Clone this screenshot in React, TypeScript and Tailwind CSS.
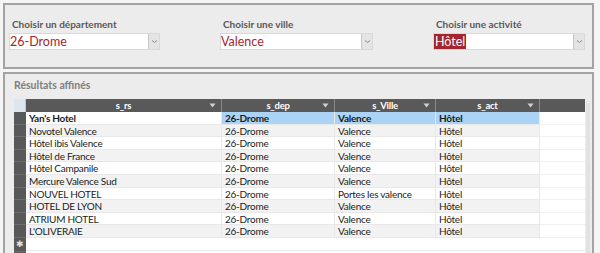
import React from "react";

const rows = [
  ["Yan's Hotel", "26-Drome", "Valence", "Hôtel"],
  ["Novotel Valence", "26-Drome", "Valence", "Hôtel"],
  ["Hôtel ibis Valence", "26-Drome", "Valence", "Hôtel"],
  ["Hôtel de France", "26-Drome", "Valence", "Hôtel"],
  ["Hôtel Campanile", "26-Drome", "Valence", "Hôtel"],
  ["Mercure Valence Sud", "26-Drome", "Valence", "Hôtel"],
  ["NOUVEL HOTEL", "26-Drome", "Portes les valence", "Hôtel"],
  ["HOTEL DE LYON", "26-Drome", "Valence", "Hôtel"],
  ["ATRIUM HOTEL", "26-Drome", "Valence", "Hôtel"],
  ["L'OLIVERAIE", "26-Drome", "Valence", "Hôtel"],
];

const cols = [
  { name: "s_rs", w: "w-[196px]" },
  { name: "s_dep", w: "w-[113px]" },
  { name: "s_Ville", w: "w-[101px]" },
  { name: "s_act", w: "w-[104px]" },
];

function Chevron() {
  return (
    <svg width="7" height="5" viewBox="0 0 7 5" fill="none" stroke="#8a8a8a" strokeWidth="1">
      <path d="M1 1.5 L3.5 3.5 L6 1.5" />
    </svg>
  );
}

function Combo({ label, value, width, selected }: { label: string; value: string; width: string; selected?: boolean }) {
  return (
    <div className={`${width} flex flex-col`}>
      <div className="pl-[3px] h-[16px] text-[10px] leading-[16px] font-bold text-[#595959]">{label}</div>
      <div className="mt-[1px] h-[17px] flex bg-white border border-[#d9d9d9]">
        <div className="flex-1 flex items-center">
          <span
            className={
              selected
                ? "bg-[#a4262c] text-white text-[12.5px] leading-[15px] px-[1px]"
                : "text-[#a4262c] text-[12.5px] leading-[15px]"
            }
          >
            {value}
          </span>
        </div>
        <div className="w-[11px] bg-[#e4e4e4] border-l border-[#c9c9c9] flex items-center justify-center">
          <Chevron />
        </div>
      </div>
    </div>
  );
}

function HeadArrow() {
  return (
    <svg width="7" height="5" viewBox="0 0 7 5">
      <path d="M0.5 0.5 H6.5 L3.5 4.5 Z" fill="#d0d0d0" />
    </svg>
  );
}

export default function App() {
  return (
    <div
      className="w-[600px] h-[253px] overflow-hidden bg-[#f5f5f5] pt-[3px] pl-[3px]"
      style={{ fontFamily: "Lato, 'Liberation Sans', sans-serif" }}
    >
      <div className="w-[591px] h-[66px] border-2 border-[#a3a3a3] bg-[#ececec] pl-[4px] pt-[11px] flex">
        <Combo label="Choisir un département" value="26-Drome" width="w-[151px]" />
        <div className="w-[60px]" />
        <Combo label="Choisir une ville" value="Valence" width="w-[153px]" />
        <div className="w-[60px]" />
        <Combo label="Choisir une activité" value="Hôtel" width="w-[152px]" selected />
      </div>

      <div className="mt-[3px] w-[591px] h-[200px] border-2 border-[#a3a3a3] bg-[#ececec] pl-[9px] pt-[4px] flex">
        <div className="flex flex-col">
          <div className="h-[21px] text-[10.5px] leading-[15px] font-bold text-[#7f7f7f]">Résultats affinés</div>
          <div className="w-[571px] text-[10px] tracking-[-0.25px] text-[#1c1c1c]">
            <div className="flex h-[13px] bg-[#595959]">
              <div className="w-[12px] bg-[#dde5ee] border-r border-[#bfc7d0]" />
              {cols.map((c) => (
                <div
                  key={c.name}
                  className={`${c.w} relative flex items-center justify-center border-r border-[#8a8a8a] text-white font-bold text-[9.5px] leading-[13px]`}
                >
                  {c.name}
                  <span className="absolute right-[5px] top-[4px] flex">
                    <HeadArrow />
                  </span>
                </div>
              ))}
              <div className="flex-1" />
            </div>
            {rows.map((r, i) => (
              <div key={i} className={`flex h-[12.6px] leading-[12px] ${i === 0 ? "font-bold" : ""}`}>
                <div className="w-[12px] bg-[#595959] border-b border-[#6e6e6e]" />
                {r.map((v, j) => (
                  <div
                    key={j}
                    className={`${cols[j].w} pl-[3px] border-b border-r border-[#e8e8e8] overflow-hidden whitespace-nowrap ${
                      i === 0 ? (j === 0 ? "bg-white" : "bg-[#abd3f5]") : i % 2 === 1 ? "bg-[#f2f2f2]" : "bg-white"
                    }`}
                  >
                    {v}
                  </div>
                ))}
                <div className="flex-1 bg-white border-b border-[#f0f0f0]" />
              </div>
            ))}
            <div className="flex h-[12.6px]">
              <div className="w-[12px] bg-[#595959] flex items-center justify-center text-[9px] text-[#e0e0e0] leading-[12px]">✱</div>
              <div className="flex-1 bg-white border-b border-[#ececec]" />
            </div>
            <div className="flex h-[12px]">
              <div className="w-[12px] bg-[#595959] border-t border-[#6e6e6e]" />
              <div className="flex-1 bg-white" />
            </div>
          </div>
        </div>
        <div className="ml-[1px] mt-[25px] w-[4px] bg-[#e2e2e2]" />
      </div>
    </div>
  );
}
